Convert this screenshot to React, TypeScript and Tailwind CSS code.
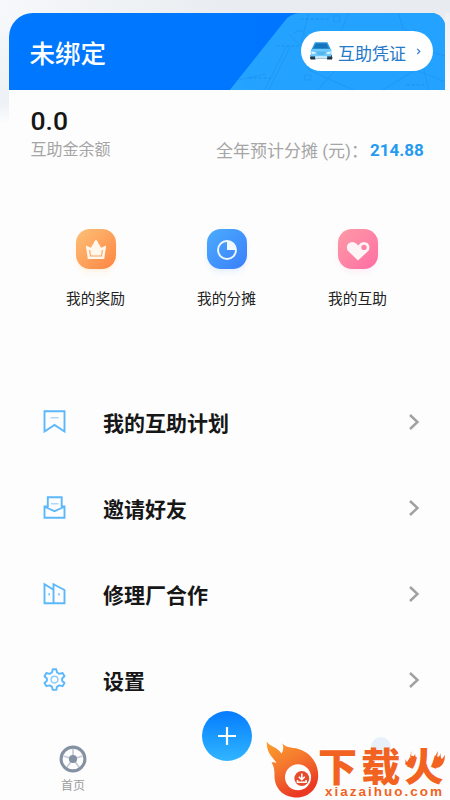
import type { ReactNode } from 'react'

interface Shortcut {
  label: string
  tile: string
  icon: ReactNode
}

interface MenuRow {
  label: string
  icon: ReactNode
}

const shortcuts: Shortcut[] = [
  {
    label: '我的奖励',
    tile: 'bg-linear-to-br from-[#fbc078] to-[#fd8440] shadow-orange-100/60',
    icon: (
      <svg viewBox="0 0 40 40" className="size-10">
        <path
          d="M9.8 16.5l5.2 2.2 1.2-2.5q1.3-.8 1.9-3.2 1.9-4 3.8 0 .6 2.4 1.9 3.2l1.2 2.5 5.2-2.2-2 13.5H11.8z"
          fill="#fff7ec"
        />
        <path d="M13.6 21l.9 6h11l.9-6" fill="none" stroke="#fda25a" strokeWidth="1.1" />
      </svg>
    ),
  },
  {
    label: '我的分摊',
    tile: 'bg-linear-to-br from-[#4cacfc] to-[#3b7efb] shadow-blue-100/60',
    icon: (
      <svg viewBox="0 0 40 40" className="size-10">
        <circle cx="20" cy="21" r="9" fill="none" stroke="#f2f8ff" strokeWidth="1.9" />
        <path d="M20 12.5V21h8.5a8.5 8.5 0 0 0-8.5-8.5z" fill="#f2f8ff" />
      </svg>
    ),
  },
  {
    label: '我的互助',
    tile: 'bg-linear-to-br from-[#fd9aa6] to-[#fd6da4] shadow-pink-100/60',
    icon: (
      <svg viewBox="0 0 40 40" className="size-10">
        <path
          d="M20 31.5L10.4 22.3a5.6 5.6 0 0 1 0-7.8 5.6 5.6 0 0 1 7.8 0l2 1.9 1.9-1.9a5.6 5.6 0 0 1 7.8 0 5.6 5.6 0 0 1 0 7.8z"
          fill="#fff5f7"
        />
        <circle cx="26" cy="18.4" r="2.7" fill="#fd84a7" />
      </svg>
    ),
  },
]

const menu: MenuRow[] = [
  {
    label: '我的互助计划',
    icon: (
      <>
        <path d="M1.5 1.2h20v20.3l-10-6.5-10 6.5z" />
        <path d="M7.5 7.8h8" strokeWidth="1.1" opacity=".7" />
      </>
    ),
  },
  {
    label: '邀请好友',
    icon: (
      <>
        <path d="M4.8 11.5V1.2h13.9v10.3" />
        <path d="M4.8 10.4H1.5v11.3h20V10.4h-2.8M2 11l4.6 2 4.9 2.2 4.9-2.2L21 11" />
        <path d="M8 7.8h7.5" strokeWidth="1.1" opacity=".7" />
      </>
    ),
  },
  {
    label: '修理厂合作',
    icon: (
      <>
        <path d="M1.5 21.2V2.2l9 5.6v13.4zM10.5 21.2v-19l11 5.8v13.2z" />
        <path d="M6.2 11v2.4M16 11v2.4" strokeWidth="1.6" opacity=".75" />
      </>
    ),
  },
  {
    label: '设置',
    icon: (
      <>
        <path
          d="M9.8 1.3h3.4l.9 3.2 2.3 1.3 3.2-.8 1.9 3.2-2.4 2.3v2.2l2.4 2.3-1.9 3.2-3.2-.8-2.3 1.3-.9 3.2H9.8l-.9-3.2-2.3-1.3-3.2.8L1.5 15l2.4-2.3v-2.2L1.5 8.2 3.4 5l3.2.8 2.3-1.3z"
          strokeLinejoin="round"
        />
        <circle cx="11.5" cy="11.6" r="3.4" strokeWidth="1.4" opacity=".7" />
      </>
    ),
  },
]

function CarIcon() {
  return (
    <svg viewBox="0 0 24 20" className="h-5 w-6">
      <path d="M1.5 14h5v4.4h-5zM18 14h5v4.4h-5z" fill="#172d3e" />
      <path d="M6 1.2h12.4L22 9v5.5H2.2V9z" fill="#2997df" />
      <path d="M7 2.4h10.4L20 8H4.3z" fill="#1475bd" />
      <path d="M1.8 8.8l3-1h14.6l3 1v6.8H1.8z" fill="#6fcaff" />
      <path d="M7.5 10.5h9.2l-1.3 3.6H8.8z" fill="#55b6ee" />
      <path d="M2.5 10.6l4 1-.4 1.3-3.4-.5zM21.7 10.6l-4 1 .4 1.3 3.4-.5z" fill="#eafaff" />
      <path d="M1 16.8h22.4" stroke="#203c4d" strokeWidth="1.4" />
      <path d="M6 15.4h12.2v2.2H6z" fill="#c9edff" />
    </svg>
  )
}

function HeaderMap() {
  return (
    <svg viewBox="0 0 437 77" className="absolute inset-0 size-full" preserveAspectRatio="none">
      <path d="M292 0Q282 0 276 8L221 77H437V0z" fill="#24a3ff" />
      <g fill="none" stroke="#1684e5" strokeWidth="1" opacity=".35">
        <path d="M256 77l22-44M260 77l22-44M293 34l-13-13M300 0l-7 27 7 30 45 20M340 0l-8 19M390 0l4 15 14 9 12 53M374 77l33-20 30 12M221 69l36-8M309 77l20-22M405 15l14 23 18 5" />
        <path d="M325 3h6v6h-6zM296 62h6v5h-6zM285 20l8-3 5 7" />
      </g>
      <g stroke="#1175d1" strokeWidth="2" strokeDasharray="3 2" opacity=".2">
        <path d="M292 6h29M268 33h22M240 65h22M398 72h20" />
      </g>
    </svg>
  )
}

function WheelIcon() {
  return (
    <svg viewBox="0 0 28 28" className="size-7">
      <circle cx="14" cy="14" r="11.9" fill="none" stroke="#8491a3" strokeWidth="3.1" />
      <path d="M14 14V4M14 14l9.5-3M14 14l6 8M14 14l-6 8M14 14l-9.5-3" stroke="#c3cbd5" strokeWidth="1.7" />
      <circle cx="14" cy="14" r="4.1" fill="#8491a3" />
    </svg>
  )
}

function Watermark() {
  return (
    <div className="absolute top-[738px] left-[265px] flex h-[62px] w-[185px]">
      <svg viewBox="0 0 55 62" className="h-[62px] w-[55px] shrink-0">
        <defs>
          <linearGradient id="flame" x1="0" y1="0" x2=".5" y2="1">
            <stop offset="0" stopColor="#f9a12d" />
            <stop offset=".5" stopColor="#f5752e" />
            <stop offset="1" stopColor="#ea3823" />
          </linearGradient>
        </defs>
        <path
          d="M1.7 3.5C5 9 12 8.5 16.5 15.5Q19.5 11 17.3 5.3C21 9.5 25 9.3 31 10.3C44 13 53.2 24 53.2 37.5C53.2 50 44 59.5 32 59.5C18 59.5 9.5 50 9.5 38C9.5 32 9 28 6.5 24.5Q9 24 11.5 25C9 20 1.5 17 1.7 3.5z"
          fill="url(#flame)"
        />
        <circle cx="33" cy="39.2" r="13" fill="white" />
        <circle cx="36.8" cy="40.5" r="7.4" fill="#e64b2b" />
        <path d="M36.8 35.5V41M33.8 38.7l3 3 3-3M32.5 42v2.2h8.6V42" fill="none" stroke="white" strokeWidth="1.6" />
      </svg>
      <div className="relative flex flex-col text-[#f26322]">
        <span className="absolute -top-px left-[51px] size-5 rounded-full bg-[#e8f1f9]" />
        <span className="relative mt-[8px] -ml-[2px] h-[38px] text-[39px] leading-[44px] font-black tracking-[4.2px] whitespace-nowrap">下载火</span>
        <span className="relative mt-px ml-[5px] font-['Liberation_Sans'] text-[13.5px] leading-[14px] font-bold tracking-[2px]">xiazaihuo.com</span>
        {/* little flames licking off both sides of the last character */}
        <svg viewBox="0 0 40 20" className="absolute top-[12px] left-[85px] h-5 w-10" fill="#f26322">
          <path d="M6 1q1 4-1 7 4-1 5-4 2 7-3 11-5 2-7-1 1-2 0-5l2 3Q6 7 6 1z" />
          <path d="M33 1q0 4-2 7 3 0 5-5-1 5 1 6l3-4q0 8-4 11-3 3-7 1-2-6 4-16z" />
        </svg>
      </div>
    </div>
  )
}

export default function App() {
  return (
    <div className="relative h-[800px] w-[450px] overflow-hidden bg-[#fdfdfd] font-[Roboto,'Noto_Sans_CJK_SC',sans-serif]">
      <div className="flex h-[124px] bg-linear-to-r from-[#f6f8fa] via-[#e9edf1] to-[#e8ebf0] pt-[12.5px]">
        <div className="w-[8.5px] bg-linear-to-b from-[#f6f8fa] via-[#edf1f5] via-80% to-[#fdfdfd]" />
        <div className="h-[112px] flex-1 rounded-t-[24px] bg-[#fdfdfd]">
          <header className="relative flex h-[77px] items-center justify-between overflow-hidden rounded-tl-[24px] rounded-tr-[14px] bg-[#0077ff] pr-[12px] pl-[21px]">
            <HeaderMap />
            <h1 className="relative pt-[6px] text-[25.5px] font-medium text-white">未绑定</h1>
            <button className="relative flex h-10 w-[132px] items-center rounded-full bg-white pl-2 text-[#2479c9]">
              <CarIcon />
              <span className="ml-[5px] pt-[7px] text-[17px]">互助凭证</span>
              <svg viewBox="0 0 5 8" className="ml-[10px] h-[7px] w-[5px]">
                <path d="M1 1l3 3-3 3" fill="none" stroke="currentColor" strokeWidth="1.3" />
              </svg>
            </button>
          </header>
        </div>
        <div className="w-[5px] bg-linear-to-b from-[#eef0f4] to-[#fdfdfd] to-80%" />
      </div>

      <section className="-mt-[17px] flex justify-between pr-[26px] pl-[30.5px]">
        <div>
          <p className="h-[28px] text-[26.5px] leading-[28px] font-medium text-[#161616]">0.0</p>
          <p className="mt-[2.5px] text-[16px] leading-6 text-[#a5a5a5]">互助金余额</p>
        </div>
        <p className="mt-[31.5px] flex text-[17px] leading-6 text-[#a5a5a5]">
          <span className="mr-[2px]">全年预计分摊 (元)：</span>
          <b className="-mt-px w-[54px] text-[#249af1]">214.88</b>
        </p>
      </section>

      <section className="mt-[66px] grid grid-cols-[131px_131px_131px] pl-[30px]">
        {shortcuts.map((s) => (
          <div key={s.label} className="flex flex-col items-center">
            <div className={`flex size-10 items-center justify-center rounded-[14px] shadow-md ${s.tile}`}>{s.icon}</div>
            <span className="mt-[18px] text-[14.7px] leading-6 text-[#222]">{s.label}</span>
          </div>
        ))}
      </section>

      <nav className="mt-[68px]">
        {menu.map((m) => (
          <div key={m.label} className="flex h-[86px] items-center pr-[30px] pl-[42.5px]">
            <svg viewBox="0 0 23 23" className="size-[23px]" fill="none" stroke="#5bb8fa" strokeWidth="1.9">
              {m.icon}
            </svg>
            <span className="ml-[37.5px] flex-1 pt-[7px] text-[21px] font-bold text-[#171717]">{m.label}</span>
            <svg viewBox="0 0 12 18" className="h-[18px] w-3" fill="none" stroke="#a0a0a0" strokeWidth="2.4">
              <path d="M2 2l7.5 7L2 16" />
            </svg>
          </div>
        ))}
      </nav>

      <footer className="absolute top-[711px] left-0 flex w-full">
        <div className="mt-[34px] ml-[59px] flex w-7 flex-col items-center">
          <WheelIcon />
          <span className="mt-px text-[12px] leading-6 whitespace-nowrap text-[#9c9c9c]">首页</span>
        </div>
        <button className="ml-[115px] flex size-[50px] items-center justify-center rounded-full bg-linear-to-b from-[#087bff] to-[#31b5ff]">
          <svg viewBox="0 0 20 20" className="size-5" stroke="white" strokeWidth="2.2">
            <path d="M10 1v18M1 10h18" />
          </svg>
        </button>
      </footer>

      <Watermark />
    </div>
  )
}
